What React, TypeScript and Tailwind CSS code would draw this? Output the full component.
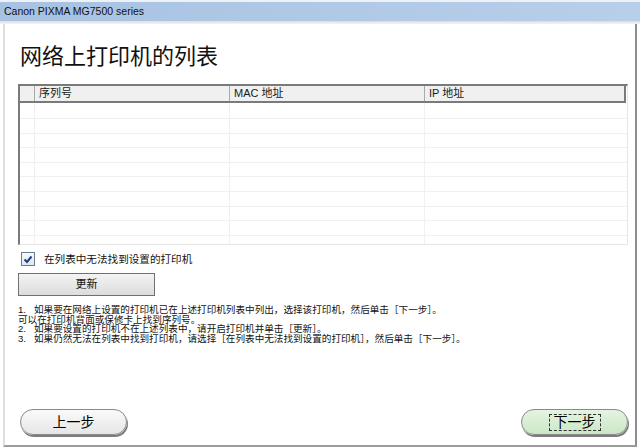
import React from 'react';

const font = { fontFamily: '"Liberation Sans", "Noto Sans CJK SC", sans-serif' };

const rows = [16, 14.6, 14.6, 14.6, 14.6, 14.6, 14.6, 14.6, 14.6];

/** Empty printer list table */
const PrinterTable: React.FC = () => (
  <div className="w-[610px] h-[161px] border-l-2 border-t-2 border-[#7a7a7a] border-r border-b border-r-[#e6e6e6] border-b-[#e6e6e6] bg-white flex flex-col">
    {/* Header */}
    <div className="flex h-[17px] bg-[#f0f0f0] border-b-2 border-[#7a7a7a] text-[11px] leading-[15px] text-[#1a1a1a] mr-[1px] border-r-2 border-r-[#7a7a7a]">
      <div className="w-[15px] border-r border-[#a9a9a9]" />
      <div className="w-[195px] pl-[4px] border-r border-[#a9a9a9]">序列号</div>
      <div className="w-[195px] pl-[4px] border-r border-[#a9a9a9]">MAC 地址</div>
      <div className="flex-1 pl-[4px]">IP 地址</div>
    </div>
    {/* Rows */}
    {rows.map((h, i) => (
      <div key={i} className="flex border-b border-[#f0f0f0]" style={{ height: h }}>
        <div className="w-[15px] border-r border-[#f0f0f0]" />
        <div className="w-[195px] border-r border-[#f0f0f0]" />
        <div className="w-[195px] border-r border-[#f0f0f0]" />
        <div className="flex-1" />
      </div>
    ))}
    <div className="flex flex-1">
      <div className="w-[15px] border-r border-[#f0f0f0]" />
      <div className="w-[195px] border-r border-[#f0f0f0]" />
      <div className="w-[195px] border-r border-[#f0f0f0]" />
      <div className="flex-1" />
    </div>
  </div>
);

const PillButton: React.FC<{ label: string; primary?: boolean }> = ({ label, primary }) => (
  <button
    className={`w-[107px] h-[26px] rounded-full border border-[#8a8a8a] shadow-[1px_2px_0_#7d7d7d] flex items-center justify-center text-[14px] text-black ${
      primary
        ? 'bg-gradient-to-b from-[#e4f4e1] to-[#cbe7c6]'
        : 'bg-gradient-to-b from-[#fafafa] to-[#e6e6e6]'
    }`}
  >
    {primary ? (
      <span className="border border-dashed border-[#333] px-[4px] leading-[15px]">{label}</span>
    ) : (
      <span className="leading-[15px]">{label}</span>
    )}
  </button>
);

export default function App() {
  return (
    <div className="w-[640px] h-[447px] bg-white overflow-hidden flex flex-col" style={font}>
      {/* Title bar */}
      <div className="h-[21px] border-t-2 border-[#eef1f5] bg-gradient-to-r from-[#a7c2e2] to-[#b8cfea] px-[4px] text-[10.5px] leading-[18px] text-[#111]">
        Canon PIXMA MG7500 series
      </div>
      <div className="h-[3px] bg-gradient-to-b from-[#dcdcdc] to-[#f4f4f4]" />

      {/* Body */}
      <div className="flex-1 ml-[3px] mr-[3px] border-l-2 border-[#dedede] border-r-2 border-r-[#8e8e8e] border-b-2 border-b-[#9c9c9c] flex flex-col">
        <div className="mt-[22px] ml-[15px] text-[22px] leading-[22px] text-[#111]">网络上打印机的列表</div>

        <div className="mt-[16px] ml-[13px]">
          <PrinterTable />
        </div>

        {/* Checkbox */}
        <div className="mt-[7px] ml-[16px] flex items-center gap-[9px]">
          <div className="w-[14px] h-[14px] border border-[#6b7b8f] bg-gradient-to-b from-[#f7f9fc] to-[#dfe7f1] flex items-center justify-center">
            <svg width="10" height="9" viewBox="0 0 10 9">
              <path d="M1.5 4.5 L4 7 L8.5 1.5" fill="none" stroke="#1e3f7a" strokeWidth="2" />
            </svg>
          </div>
          <span className="text-[10.6px] leading-[14px] text-[#111]">在列表中无法找到设置的打印机</span>
        </div>

        {/* Refresh */}
        <button className="mt-[7px] ml-[13px] w-[137px] h-[23px] border border-[#707070] bg-gradient-to-b from-[#f4f4f4] to-[#dcdcdc] text-[11px] text-[#111] flex items-center justify-center">
          更新
        </button>

        {/* Instructions */}
        <div className="mt-[9px] ml-[13px] text-[9.6px] leading-[9.6px] text-[#111]">
          <p>1.&nbsp;&nbsp;&nbsp;如果要在网络上设置的打印机已在上述打印机列表中列出，选择该打印机，然后单击［下一步］。</p>
          <p>可以在打印机背面或保修卡上找到序列号。</p>
          <p>2.&nbsp;&nbsp;&nbsp;如果要设置的打印机不在上述列表中，请开启打印机并单击［更新］。</p>
          <p>3.&nbsp;&nbsp;&nbsp;如果仍然无法在列表中找到打印机，请选择［在列表中无法找到设置的打印机］，然后单击［下一步］。</p>
        </div>

        {/* Navigation */}
        <div className="mt-auto mb-[10px] ml-[15px] mr-[7px] flex justify-between">
          <PillButton label="上一步" />
          <PillButton label="下一步" primary />
        </div>
      </div>
    </div>
  );
}
